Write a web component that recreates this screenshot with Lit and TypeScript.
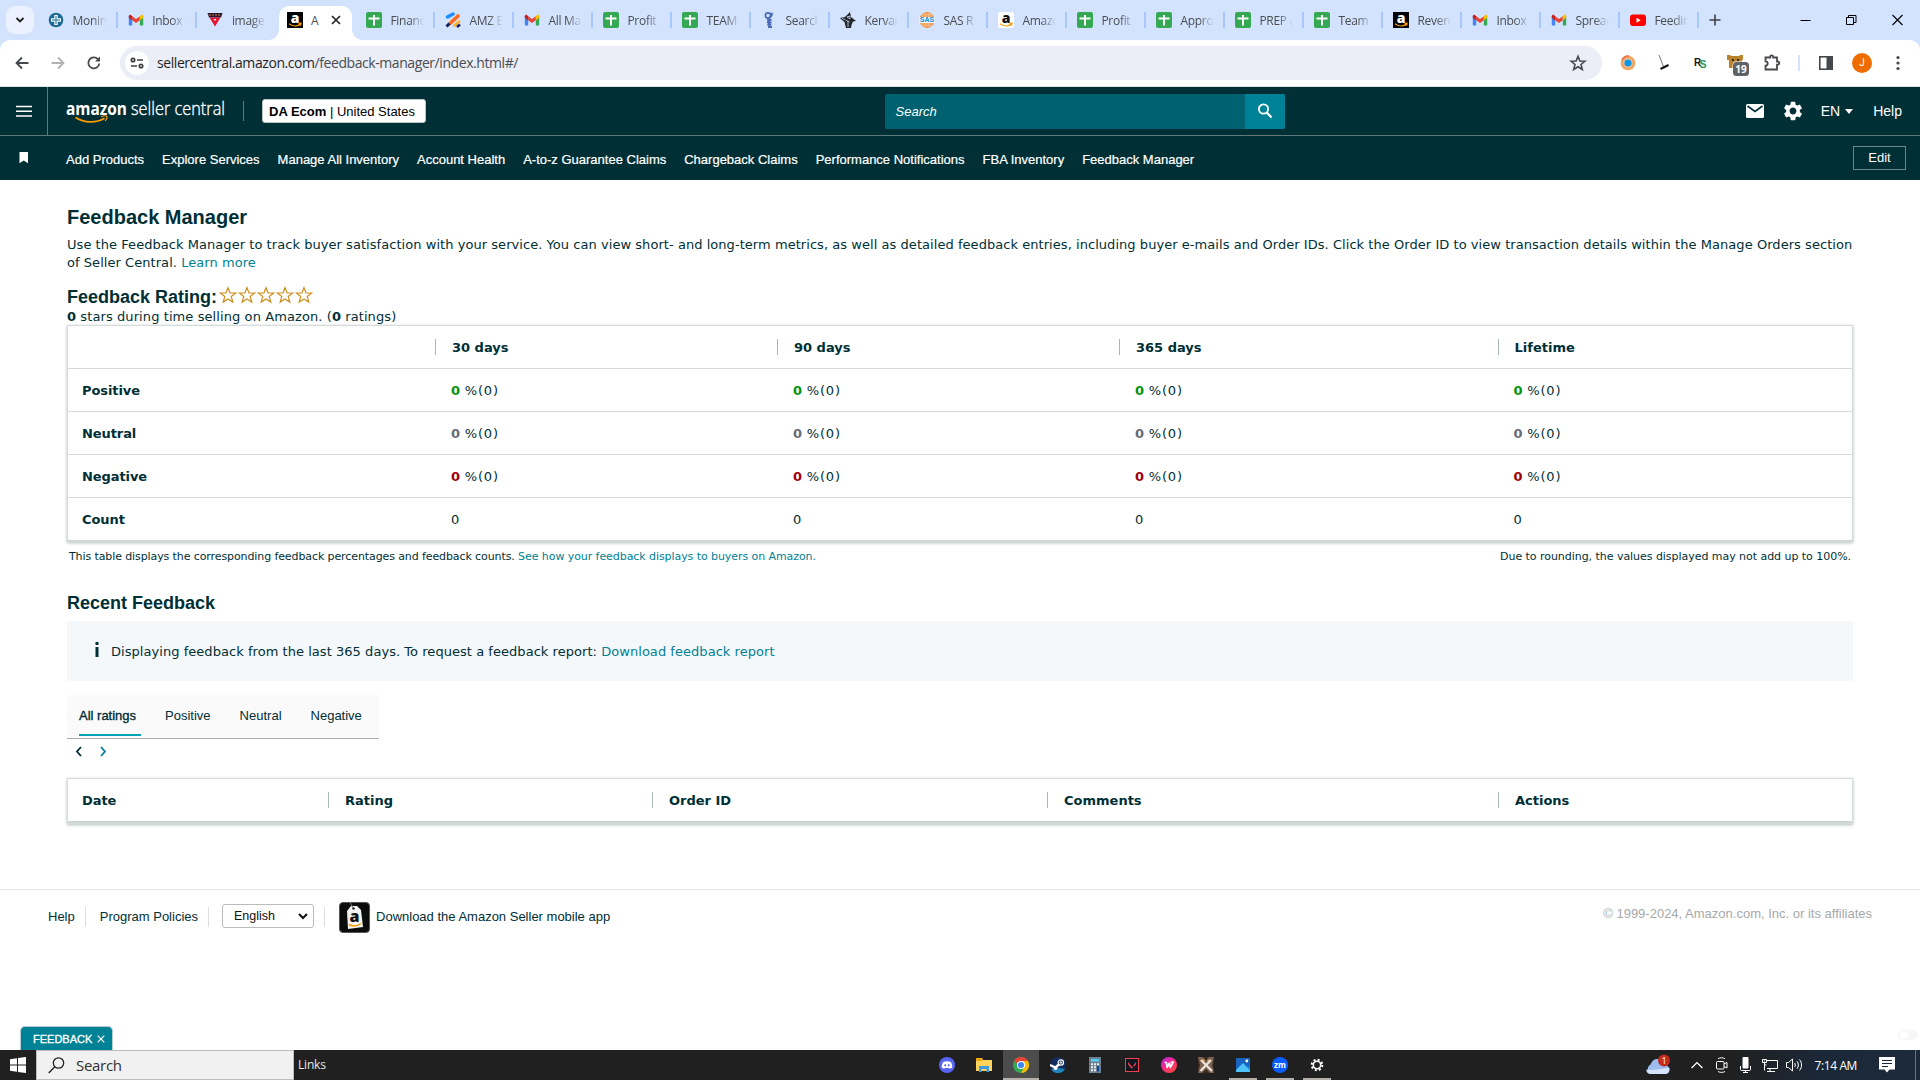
import { LitElement, html, css, TemplateResult } from "lit";
import { customElement } from "lit/decorators.js";

type Icon = TemplateResult;

const sheet: Icon = html`<svg width="16" height="16" viewBox="0 0 16 16"><rect width="16" height="16" rx="2" fill="#34a853"/><path d="M2.5 6.5h11M8 3v10.5" stroke="#fff" stroke-width="2"/></svg>`;
const gmail: Icon = html`<svg width="16" height="16" viewBox="0 0 16 16"><path d="M.8 4v8.6c0 .6.4 1 1 1h2.4V7.3z" fill="#4285f4"/><path d="M15.2 4v8.6c0 .6-.4 1-1 1h-2.4V7.3z" fill="#34a853"/><path d="M4.2 4.2v4L8 11l3.8-2.8v-4L8 7.1z" fill="#ea4335"/><path d="M.8 4.2v1.6l3.4 2.6V4.2L3 3C2 2.3.8 3 .8 4.2z" fill="#c5221f"/><path d="M15.2 4.2v1.6l-3.4 2.6V4.2L13 3c1-.7 2.2 0 2.2 1.2z" fill="#fbbc04"/></svg>`;
const amazon = (bg: string, fg: string): Icon => html`<svg width="16" height="16" viewBox="0 0 16 16"><rect width="16" height="16" rx=${bg === "#fff" ? 2.5 : 0} fill=${bg}/><text x="8" y="10.6" font-family="Open Sans, sans-serif" font-size="14" font-weight="800" text-anchor="middle" fill=${fg}>a</text><path d="M2 11.8c3.5 2.7 8 2.7 11 .6M11.500 11.500l2.500-.2-.5 2.400" fill="none" stroke="#f90" stroke-width="1.3"/></svg>`;
const youtube: Icon = html`<svg width="16" height="16" viewBox="0 0 16 16"><rect y="2.5" width="16" height="11.5" rx="3" fill="#f00"/><path d="M6.5 5.700v5l4.200-2.500z" fill="#fff"/></svg>`;
const monin: Icon = html`<svg width="16" height="16" viewBox="0 0 16 16"><circle cx="8" cy="8" r="7.300" fill="#1b6a94"/><path d="M6.300 3h3.400v3.300H13v3.400H9.700V13H6.300V9.700H3V6.300h3.300z" fill="#fff"/><path d="M8 4v8M4 8h8" stroke="#1b6a94" stroke-width="1"/></svg>`;
const triangle: Icon = html`<svg width="16" height="16" viewBox="0 0 16 16"><path d="M.5 1h15L14 5.500H2z" fill="#2b1830"/><path d="M2 3h12" stroke="#d88a3a" stroke-width="1.200" stroke-dasharray="2 1"/><path d="M2.500 5.500h11L8 14.500z" fill="#e8112d"/><path d="M6.500 7h3L8 9z" fill="#fff"/></svg>`;
const amz: Icon = html`<svg width="16" height="16" viewBox="0 0 16 16"><path d="M2.500 5L8 2" stroke="#1e90ff" stroke-width="3.500" stroke-linecap="round"/><path d="M5.500 11L13 4" stroke="#ff6a1a" stroke-width="3.600" stroke-linecap="round"/><path d="M1.500 14.500l3-3" stroke="#17205c" stroke-width="3"/><path d="M9.500 13.500l4.500-4" stroke="#ffb229" stroke-width="2.800" stroke-linecap="round"/><path d="M12 15l3-2.500" stroke="#17205c" stroke-width="2.500"/></svg>`;
const figure: Icon = html`<svg width="16" height="16" viewBox="0 0 16 16"><g fill="none" stroke="#4a6ab8"><circle cx="7" cy="3.500" r="2.600" stroke-width="1.600"/><path d="M10.500.8c1 2-.5 4-2.500 5.500M6 7.500l4.500.6M6 10l4.500.5M6.300 12.500l4 .3M7 15h4M8 6v9" stroke-width="2"/></g></svg>`;
const kervan: Icon = html`<svg width="16" height="16" viewBox="0 0 16 16"><path d="M0 6l5-1 5-5 1 5 5 4-3 .5-1.500 3.500-.5 3H6L4.500 10 2 8z" fill="#23262b"/><path d="M7 5l3-1v3zM8 9v6M5.500 8l4 2M2 6.500l3 1" stroke="#d3e3fd" stroke-width=".8" fill="none"/></svg>`;
const sas: Icon = html`<svg width="16" height="16" viewBox="0 0 16 16"><circle cx="8" cy="8" r="7.300" fill="#fde6cf"/><g fill="none" stroke="#f08a32"><circle cx="8" cy="8" r="7.300"/><ellipse cx="8" cy="8" rx="3.600" ry="7.300"/><path d="M2 4h12M2 12h12M8 0v16"/></g><rect y="5" width="16" height="6" fill="#eaf3ff"/><text x="8" y="10.300" font-family="Liberation Sans" font-size="7" font-weight="700" text-anchor="middle" fill="#1d8fd6">SAS</text></svg>`;

const TABS_LEFT: [Icon, string][] = [[monin, "Monin"], [gmail, "Inbox ("], [triangle, "image"]];
const TABS_RIGHT: [Icon, string][] = [
  [sheet, "Financ"], [amz, "AMZ E"], [gmail, "All Ma"], [sheet, "Profit"], [sheet, "TEAM"],
  [figure, "Search"], [kervan, "Kervan"], [sas, "SAS R"], [amazon("#fff", "#111"), "Amazo"],
  [sheet, "Profit"], [sheet, "Appro"], [sheet, "PREP a"], [sheet, "Team A"],
  [amazon("#000", "#fff"), "Reven"], [gmail, "Inbox"], [gmail, "Spread"], [youtube, "Feedin"],
];

const gearPath = "M19.14 12.94c.04-.3.06-.61.06-.94 0-.32-.02-.64-.07-.94l2.03-1.58c.18-.14.23-.41.12-.61l-1.92-3.32c-.12-.22-.37-.29-.59-.22l-2.39.96c-.5-.38-1.03-.7-1.62-.94l-.36-2.54c-.04-.24-.24-.41-.48-.41h-3.84c-.24 0-.43.17-.47.41l-.36 2.54c-.59.24-1.13.57-1.62.94l-2.39-.96c-.22-.08-.47 0-.59.22L2.74 8.87c-.12.21-.08.47.12.61l2.03 1.58c-.05.3-.09.63-.09.94s.02.64.07.94l-2.03 1.58c-.18.14-.23.41-.12.61l1.92 3.32c.12.22.37.29.59.22l2.39-.96c.5.38 1.03.7 1.62.94l.36 2.54c.05.24.24.41.48.41h3.84c.24 0 .44-.17.47-.41l.36-2.54c.59-.24 1.13-.56 1.62-.94l2.39.96c.22.08.47 0 .59-.22l1.92-3.32c.12-.22.07-.47-.12-.61l-2.01-1.58zM12 15.600c-1.980 0-3.600-1.620-3.600-3.600s1.620-3.600 3.600-3.600 3.600 1.620 3.600 3.600-1.620 3.600-3.600 3.600z";

@customElement("browser-chrome")
export class BrowserChrome extends LitElement {
  static styles = css`
    :host { display: block; font-family: "Open Sans", "Noto Sans", sans-serif; color: #4a4d51; }
    svg { display: block; flex: none; }
    .strip { display: flex; height: 40px; background: #d3e3fd; }
    .menu { width: 28px; height: 28px; margin: 6px 4px 0 6px; border-radius: 9px; background: #ebf1fe; display: grid; place-items: center; }
    .tab { width: 79px; height: 40px; box-sizing: border-box; display: flex; align-items: center; padding-left: 10px; flex: none; }
    .left .tab { width: 79.7px; }
    .left, .right { display: flex; }
    .label { margin: 2px 0 0 8.5px; width: 35px; font-size: 12px; letter-spacing: -0.3px; line-height: 18px; white-space: nowrap; overflow: hidden; -webkit-mask-image: linear-gradient(90deg, #000 55%, transparent 97%); mask-image: linear-gradient(90deg, #000 55%, transparent 97%); }
    .tab::after { content: ""; width: 2px; height: 16px; background: #a8c7fa; margin-left: auto; }
    .left .tab:last-child::after { background: none; }
    .active { width: 73px; margin: 6px 4px 0 1.900px; background: #fff; border-radius: 10px 10px 0 0; display: flex; align-items: center; padding: 0 0 6px 8px; box-sizing: border-box; font-size: 12px; position: relative; }
    .active span { margin: 1px auto 0 8px; }
    .active svg:last-child { margin-right: 11px; }
    .active::before, .active::after { content: ""; position: absolute; bottom: 0; width: 10px; height: 10px; }
    .active::before { left: -10px; background: radial-gradient(circle at 0 0, transparent 9.5px, #fff 10px); }
    .active::after { right: -10px; background: radial-gradient(circle at 100% 0, transparent 9.5px, #fff 10px); }
    .plus { margin: 14px 0 0 10px; }
    .win { margin-left: auto; display: flex; gap: 35px; padding: 14px 17px 0 0; }
    .barwrap { background: #d3e3fd; }
    .bar { height: 47px; box-sizing: border-box; border-bottom: 1px solid #dcdfe3; background: #fff; border-radius: 10px 10px 0 0; display: flex; align-items: center; padding: 0 13px 1px 13px; }
    .nav { display: flex; gap: 18px; width: 107px; flex: none; }
    .url { flex: none; width: 1482px; height: 34px; border-radius: 17px; background: #ebeef7; display: flex; align-items: center; box-sizing: border-box; padding: 0 15px 0 5px; }
    .site { width: 24px; height: 24px; border-radius: 50%; background: #fff; display: grid; place-items: center; margin-right: 8px; }
    .addr { font-size: 14px; letter-spacing: -0.430px; color: #4a4d51; white-space: nowrap; }
    .addr b { font-weight: 400; color: #1f1f1f; }
    .url > svg { margin-left: auto; }
    .ext { flex: 1; display: flex; align-items: center; padding-left: 16px; gap: 16px; }
    .ext svg { margin-right: 0; }
    .ext .bear { margin-right: -4px; }
    .sep { width: 2px; height: 16px; background: #d3e3fd; }
    .ext .side { margin: 0 1px; }
    .avatar { width: 20px; height: 20px; border-radius: 50%; background: #ef6c00; color: #fff; font: 10px/20px Roboto, sans-serif; text-align: center; }
  `;
  tab(t: [Icon, string]) {
    return html`<div class="tab">${t[0]}<span class="label">${t[1]}</span></div>`;
  }
  render() {
    return html`
      <div class="strip">
        <div class="menu"><svg width="10" height="10" viewBox="0 0 10 10"><path d="M1.500 3L5 6.500 8.500 3" fill="none" stroke="#1f1f1f" stroke-width="1.800"/></svg></div>
        <div class="left">${TABS_LEFT.map((t) => this.tab(t))}</div>
        <div class="active">${amazon("#000", "#fff")}<span>A</span><svg width="10" height="10" viewBox="0 0 10 10"><path d="M1 1l8 8M9 1L1 9" stroke="#1f1f1f" stroke-width="1.600"/></svg></div>
        <div class="right">${TABS_RIGHT.map((t) => this.tab(t))}</div>
        <svg class="plus" width="12" height="12" viewBox="0 0 12 12"><path d="M6 .5v11M.5 6h11" stroke="#3c4043" stroke-width="1.600"/></svg>
        <div class="win">
          <svg width="11" height="12" viewBox="0 0 11 12"><path d="M.5 6.500h10" stroke="#000"/></svg>
          <svg width="11" height="12" viewBox="0 0 11 12"><path d="M.5 3.500h7v7h-7zM2.500 3V1.500h7.500v7H8" fill="none" stroke="#000"/></svg>
          <svg width="11" height="12" viewBox="0 0 11 12"><path d="M.5 1l10 10M10.500 1l-10 10" stroke="#000" stroke-width="1.100"/></svg>
        </div>
      </div>
      <div class="barwrap"><div class="bar">
        <div class="nav">
          <svg width="18" height="18" viewBox="0 0 18 18"><path d="M15.500 9H4M9 3.500L3.500 9 9 14.500" fill="none" stroke="#45484c" stroke-width="1.800"/></svg>
          <svg width="18" height="18" viewBox="0 0 18 18"><path d="M2.500 9H14M9 3.500L14.500 9 9 14.500" fill="none" stroke="#b0b3b6" stroke-width="1.800"/></svg>
          <svg width="18" height="18" viewBox="0 0 18 18"><path d="M14.300 9.500A5.500 5.500 0 1 1 12.800 5.100l1 1" fill="none" stroke="#45484c" stroke-width="1.800"/><path d="M15 2.500v5h-5z" fill="#45484c"/></svg>
        </div>
        <div class="url">
          <div class="site"><svg width="14" height="12" viewBox="0 0 14 12" fill="none" stroke="#3c4043" stroke-width="1.700"><circle cx="3" cy="3" r="1.700"/><path d="M7 3h6M1 9h6"/><circle cx="11" cy="9" r="1.700"/></svg></div>
          <span class="addr"><b>sellercentral.amazon.com</b>/feedback-manager/index.html#/</span>
          <svg width="18" height="18" viewBox="0 0 18 18"><path d="M9 2.300l1.900 4.700 5 .3-3.900 3.200 1.300 4.900L9 12.700l-4.300 2.700L6 10.500 2.100 7.300l5-.3z" fill="none" stroke="#45484c" stroke-width="1.600"/></svg>
        </div>
        <div class="ext">
          <svg width="20" height="20" viewBox="0 0 20 20"><circle cx="10" cy="10" r="7.300" fill="#f2a463"/><circle cx="10" cy="10" r="4.500" fill="#f5c7a0"/><circle cx="10" cy="10" r="3.600" fill="#0c95e8"/><path d="M4 7a7 7 0 0 1 7-4" stroke="#e8734a" stroke-width="1.500" fill="none"/></svg>
          <svg width="20" height="20" viewBox="0 0 20 20"><path d="M5 2l5 13" stroke="#777" stroke-width="1"/><path d="M6.500 16l8-4" stroke="#111" stroke-width="2"/></svg>
          <svg width="20" height="20" viewBox="0 0 20 20"><text x="4" y="13" font-family="Liberation Sans" font-weight="700" font-size="10" fill="#111">R</text><text x="9.500" y="15" font-family="Liberation Sans" font-weight="700" font-size="10.500" fill="#1f9a55">S</text></svg>
          <svg class="bear" width="24" height="26" viewBox="0 0 24 26"><path d="M1 5h3l1 1h8l1-1h3v5h-1v8H3v-8H1z" fill="#b9822b"/><path d="M6 10h2M11 10h2" stroke="#3c2a10" stroke-width="2"/><rect x="6.500" y="11.500" width="17" height="15" rx="4" fill="#fff"/><rect x="7" y="12" width="16" height="14" rx="3.500" fill="#5f6368"/><text x="15" y="23" font-family="Open Sans" font-weight="700" font-size="10" fill="#fff" text-anchor="middle">19</text></svg>
          <svg width="20" height="20" viewBox="0 0 20 20"><path d="M4 4.500h4.200v-.7a1.500 1.500 0 0 1 3 0v.7H15v4h.7a1.600 1.600 0 0 1 0 3.200H15V16.500H3.500v-3.800a2.200 2.200 0 0 0 0-4.400V4.500z" fill="none" stroke="#45484c" stroke-width="1.800"/></svg>
          <span class="sep"></span>
          <svg class="side" width="18" height="18" viewBox="0 0 18 18"><rect x="2.800" y="2.800" width="12.400" height="12.400" fill="none" stroke="#45484c" stroke-width="1.600"/><path d="M9.500 3h6v12h-6z" fill="#45484c"/></svg>
          <span class="avatar">J</span>
          <svg width="20" height="20" viewBox="0 0 20 20" fill="#45484c"><circle cx="10" cy="4.500" r="1.600"/><circle cx="10" cy="10" r="1.600"/><circle cx="10" cy="15.500" r="1.600"/></svg>
        </div>
      </div></div>`;
  }
}

@customElement("seller-header")
export class SellerHeader extends LitElement {
  static styles = css`
    :host { display: block; background: #002f36; color: #fff; font-family: "Liberation Sans", Arial, sans-serif; }
    svg { display: block; flex: none; }
    .top { display: flex; align-items: center; height: 49px; box-sizing: border-box; border-bottom: 1px solid #5d7a7e; }
    .burger { width: 48px; height: 48px; box-sizing: border-box; border-right: 1px solid #5d7a7e; display: grid; place-items: center; }
    .logo { margin-left: 18px; }
    .bar { width: 1px; height: 20px; background: #5d7a7e; margin: 0 18px 0 13px; }
    .store { width: 164px; height: 24px; box-sizing: border-box; background: #fff; color: #000; border: 1px solid #bcc5c6; border-radius: 3px; font-size: 13px; line-height: 23px; padding-left: 6px; white-space: nowrap; }
    .search { margin-left: 459px; width: 400px; height: 35px; display: flex; background: #006170; border-radius: 2px; overflow: hidden; }
    .search i { flex: 1; font-size: 13px; line-height: 35px; padding-left: 10.500px; }
    .go { width: 40px; background: #008296; display: grid; place-items: center; }
    .tools { margin-left: auto; display: flex; align-items: center; font-size: 14px; padding-right: 18px; }
    .tools svg:first-child { margin-right: 19px; }
    .tools .en { margin-left: 18px; }
    .caret { margin: 1px 20px 0 5px; border: 4.500px solid transparent; border-top: 5px solid #fff; border-bottom: 0; }
    .nav { display: flex; align-items: center; height: 44px; font-size: 13px; line-height: 18px; padding: 0 14px 0 19px; white-space: nowrap; box-sizing: border-box; }
    .links { display: flex; gap: 18px; margin-left: 37px; padding-top: 3px; -webkit-text-stroke: 0.200px #fff; }
    .edit { margin-left: auto; width: 53px; height: 24px; border: 1px solid #6c8589; box-sizing: border-box; text-align: center; line-height: 22px; }
  `;
  render() {
    const links = ["Add Products", "Explore Services", "Manage All Inventory", "Account Health", "A-to-z Guarantee Claims", "Chargeback Claims", "Performance Notifications", "FBA Inventory", "Feedback Manager"];
    return html`
      <div class="top">
        <div class="burger"><svg width="16" height="12" viewBox="0 0 16 12"><path d="M0 1.500h16M0 6.200h16M0 11h16" stroke="#fff" stroke-width="1.500"/></svg></div>
        <svg class="logo" width="164" height="34" viewBox="0 0 164 34">
          <text x="0" y="21" font-family="Open Sans" font-weight="700" font-size="17.500" fill="#fff" textLength="61" lengthAdjust="spacingAndGlyphs">amazon</text>
          <text x="65" y="20.500" font-family="Open Sans" font-weight="300" font-size="18" fill="#fff" stroke="#fff" stroke-width=".35" textLength="94" lengthAdjust="spacingAndGlyphs">seller central</text>
          <path d="M9.500 23.500c9 5.500 20 6 29 .8" fill="none" stroke="#f90" stroke-width="1.700"/><path d="M35 22.800c3-1.200 5.500-1.200 6 0s-.7 2.700-1.800 4" fill="none" stroke="#f90" stroke-width="1.200"/>
        </svg>
        <span class="bar"></span>
        <div class="store"><b>DA Ecom</b> | United States</div>
        <div class="search"><i>Search</i><div class="go"><svg width="16" height="18" viewBox="0 0 16 18"><circle cx="6.500" cy="7" r="4.600" fill="none" stroke="#fff" stroke-width="1.800"/><path d="M9.800 10.500l4.700 5" stroke="#fff" stroke-width="2.200"/></svg></div></div>
        <div class="tools">
          <svg width="18" height="14" viewBox="0 0 18 14"><rect width="18" height="14" rx="1.500" fill="#fff"/><path d="M1.500 2L9 7.500 16.500 2" fill="none" stroke="#002f36" stroke-width="1.600"/></svg>
          <svg width="20" height="20" viewBox="1.500 1.500 21 21"><path d=${gearPath} fill="#fff"/></svg>
          <span class="en">EN</span><span class="caret"></span><span>Help</span>
        </div>
      </div>
      <div class="nav">
        <svg width="10" height="12" viewBox="0 0 10 12"><path d="M.5 0h8.500v11.300L4.750 8.500.5 11.300z" fill="#fff"/></svg>
        <div class="links">${links.map((l) => html`<span>${l}</span>`)}</div>
        <div class="edit">Edit</div>
      </div>`;
  }
}

@customElement("feedback-page")
export class FeedbackPage extends LitElement {
  static styles = css`
    :host { display: block; color: #002f36; font: 13px/18px "DejaVu Sans", Verdana, sans-serif; letter-spacing: 0.045px; }
    svg { display: block; }
    .main { padding: 25px 67px 0; height: 709px; box-sizing: border-box; }
    h1, h2, p { margin: 0; }
    h1, h2 { font-family: "Liberation Sans", Arial, sans-serif; letter-spacing: 0; }
    h1 { font-size: 20px; line-height: 24px; }
    h2 { font-size: 18px; line-height: 22px; }
    p { margin: 7px -8px 0 0; letter-spacing: 0.050px; }
    .link { color: #008296; }
    .rating { display: flex; margin-top: 14px; gap: 2px; height: 21px; }
    .stars { display: flex; gap: 1px; }
    .sum { padding-top: 1px; height: 17px; letter-spacing: 0.090px; }
    .box { border: 1px solid #d5dbdb; box-shadow: 0 1px 3px rgba(0, 40, 40, 0.300); background: #fff; }
    .row { display: grid; grid-template-columns: 367px 342px 342px 378.500px 1fr; height: 43px; box-sizing: border-box; border-bottom: 1px solid #d5dbdb; align-items: center; letter-spacing: 0; }
    .entries .row { grid-template-columns: 260px 324px 395px 451px 1fr; }
    .entries .row { border-bottom-width: 2px; height: 44px; }
    .row:last-child { border-bottom-color: #ccd4d4; }
    .row > * { padding: 2px 0 0 16px; }
    .row > :first-child { padding-left: 14px; font-weight: 700; letter-spacing: -0.080px; }
    .row.head > * { padding-top: 0; border-left: 1px solid #aab7b8; line-height: 16px; height: 16px; font-weight: 700; }
    .row.head > :first-child { border-left: 0; }
    .head > * > span { position: relative; top: 1px; }
    .pc { letter-spacing: 0.850px; margin-left: 0.500px; }
    .good { color: #00960a; } .mid { color: #666b75; } .bad { color: #a00009; }
    .note { display: flex; justify-content: space-between; font-size: 11px; padding: 0 2px; margin: 6px 0 26px; letter-spacing: -0.040px; }
    .note span:first-child { letter-spacing: -0.100px; }
    .note span .link:first-child { letter-spacing: -0.070px; }
    .info { margin-top: 7px; height: 60px; box-sizing: border-box; padding-top: 1px; background: #f4f8fa; display: flex; align-items: center; padding-left: 28px; gap: 12px; }
    .info svg { margin-top: -4px; }
    .tabs { display: flex; margin-top: 14px; width: 312px; height: 44px; box-sizing: border-box; border-bottom: 1px solid #aaafb0; background: #fafafa; font: 13px/16px "Liberation Sans", Arial, sans-serif; letter-spacing: 0; padding: 13px 0 0 12px; gap: 29px; }
    .tabs span:first-child { -webkit-text-stroke: 0.350px #002f36; border-bottom: 2px solid #00a4b4; padding: 0 5px 0 0; height: 26px; margin-right: -5px; white-space: nowrap; }
    .pager { display: flex; gap: 16px; padding: 7px 0 0 8px; height: 39px; box-sizing: border-box; }
    .foot { border-top: 1px solid #e3e5e6; height: 161px; box-sizing: border-box; display: flex; font: 13px/20px "Liberation Sans", Arial, sans-serif; letter-spacing: 0; padding: 11px 48px 0; position: relative; align-items: flex-start; }
    .foot > span { margin-top: 6px; }
    .foot .v { width: 1px; height: 20px; background: #dcdfe0; }
    .foot .v1 { margin-left: 10px; margin-right: 14px; }
    .foot .v2 { margin-left: 10px; }
    .sel { box-sizing: border-box; width: 92px; height: 24px; margin: 3px 10px 0 13px; border: 1px solid #bbb; border-radius: 3px; padding: 0 5px 0 11px; line-height: 24px; display: flex; justify-content: space-between; align-items: center; font-size: 12.500px; color: #111; }
    .app { margin: 1px 6px 0 14px; }
    .copy { margin-left: auto; color: #a6a9ab; }
    .foot > .copy { margin-top: 3px; }
    .tag { position: absolute; left: 20px; bottom: 0; width: 93px; height: 24px; box-sizing: border-box; border: 1px solid #b9cccf; border-bottom: 0; border-radius: 5px 5px 0 0; background: #008296; color: #fff; font-size: 11px; line-height: 24px; padding-left: 12px; display: flex; align-items: center; gap: 5px; -webkit-text-stroke: 0.300px #fff; }
    .toggle { position: absolute; right: 2px; bottom: 10px; width: 20px; height: 10px; border-radius: 5px; background: #f7f7f7; }
    .toggle::after { content: ""; position: absolute; left: 2px; top: 1px; width: 8px; height: 8px; border-radius: 50%; background: #fff; }
  `;
  pct(cls: string) {
    return [0, 1, 2, 3].map(() => html`<span><b class=${cls}>0</b> <span class="pc">%(0)</span></span>`);
  }
  render() {
    const head = (h: string) => html`<span><span>${h}</span></span>`;
    return html`
      <div class="main">
        <h1>Feedback Manager</h1>
        <p>Use the Feedback Manager to track buyer satisfaction with your service. You can view short- and long-term metrics, as well as detailed feedback entries, including buyer e-mails and Order IDs. Click the Order ID to view transaction details within the Manage Orders section of Seller Central. <span class="link">Learn more</span></p>
        <div class="rating"><h2>Feedback Rating:</h2><div class="stars">${[1, 2, 3, 4, 5].map(() => html`<svg width="18" height="18" viewBox="0 0 18 18"><path d="M9 1.600l2 5.200 5.700.2-4.500 3.500 1.600 5.500L9 12.900l-4.800 3.100 1.600-5.500L1.300 7 7 6.800z" fill="#fff" stroke="#cf8f1f" stroke-width="1.200"/></svg>`)}</div></div>
        <div class="sum"><b>0</b> stars during time selling on Amazon. (<b>0</b> ratings)</div>
        <div class="box">
          <div class="row head">${["", "30 days", "90 days", "365 days", "Lifetime"].map(head)}</div>
          <div class="row"><span>Positive</span>${this.pct("good")}</div>
          <div class="row"><span>Neutral</span>${this.pct("mid")}</div>
          <div class="row"><span>Negative</span>${this.pct("bad")}</div>
          <div class="row"><span>Count</span><span>0</span><span>0</span><span>0</span><span>0</span></div>
        </div>
        <div class="note"><span>This table displays the corresponding feedback percentages and feedback counts. <span class="link">See how your feedback displays to buyers on Amazon.</span></span><span>Due to rounding, the values displayed may not add up to 100%.</span></div>
        <h2>Recent Feedback</h2>
        <div class="info"><svg width="4" height="15" viewBox="0 0 4 15"><path d="M.5 0h3v3h-3zM.5 5h3v10h-3z" fill="#002f36"/></svg><span>Displaying feedback from the last 365 days. To request a feedback report: <span class="link">Download feedback report</span></span></div>
        <div class="tabs"><span>All ratings</span><span>Positive</span><span>Neutral</span><span>Negative</span></div>
        <div class="pager">
          <svg width="8" height="11" viewBox="0 0 8 11"><path d="M6 1L2 5.500 6 10" fill="none" stroke="#002f36" stroke-width="1.800"/></svg>
          <svg width="8" height="11" viewBox="0 0 8 11"><path d="M2 1l4 4.500L2 10" fill="none" stroke="#008296" stroke-width="1.800"/></svg>
        </div>
        <div class="box entries"><div class="row head">${["Date", "Rating", "Order ID", "Comments", "Actions"].map(head)}</div></div>
      </div>
      <div class="foot">
        <span>Help</span><span class="v v1"></span>
        <span>Program Policies</span><span class="v v2"></span>
        <div class="sel">English<svg width="10" height="7" viewBox="0 0 10 7"><path d="M1 1l4 4 4-4" fill="none" stroke="#111" stroke-width="2"/></svg></div>
        <span class="v"></span>
        <svg class="app" width="31" height="31" viewBox="0 0 31 31"><rect x=".5" y=".5" width="30" height="30" rx="3.500" fill="#0c0c0c" stroke="#555"/><path d="M8 9l4-5 6 0 4 4 2 17-15 2z" fill="#f4f4f2"/><circle cx="14.500" cy="6.500" r="1.200" fill="#222"/><path d="M14 6L11 0" stroke="#777"/><text x="15.500" y="20" font-family="Open Sans" font-weight="800" font-size="16" text-anchor="middle" fill="#111">a</text><path d="M10 22.500c4 2.200 8 1.800 12-1" stroke="#f90" stroke-width="1.500" fill="none"/></svg>
        <span>Download the Amazon Seller mobile app</span>
        <span class="copy">© 1999-2024, Amazon.com, Inc. or its affiliates</span>
        <div class="tag">FEEDBACK<svg width="8" height="8" viewBox="0 0 8 8"><path d="M.7.7l6.600 6.600M7.300.7L.7 7.300" stroke="#fff" stroke-width="1.200"/></svg></div>
        <div class="toggle"></div>
      </div>`;
  }
}

const APPS: { icon: Icon; state?: string }[] = [
  { icon: html`<svg width="16" height="16" viewBox="0 0 16 16"><circle cx="8" cy="8" r="8" fill="#5865f2"/><path d="M4 5.200c2.500-1.300 5.500-1.300 8 0 1 2 1.400 3.700 1.200 5.300-.8.600-1.600 1-2.500 1.200l-.7-1c-1.300.3-2.700.3-4 0l-.7 1c-.9-.2-1.700-.6-2.500-1.200-.2-1.600.2-3.300 1.200-5.300z" fill="#fff"/><circle cx="6.200" cy="8.300" r="1.100" fill="#5865f2"/><circle cx="9.800" cy="8.300" r="1.100" fill="#5865f2"/></svg>` },
  { icon: html`<svg width="16" height="16" viewBox="0 0 16 16"><path d="M0 1h6l1 2h9v11H0z" fill="#ffd35a"/><path d="M0 1h6l1 2-1 1H0z" fill="#e8a713"/><path d="M3 15V9h10v6h-2.500v-3h-5v3z" fill="#3f9be0"/></svg>` },
  { state: "on", icon: html`<svg width="16" height="16" viewBox="0 0 16 16"><circle cx="8" cy="8" r="8" fill="#34a853"/><path d="M8 4h6.930A8 8 0 0 1 8 16l3.460-6z" fill="#fbbc04"/><path d="M1.070 4A8 8 0 0 1 14.930 4H8L4.500 7z" fill="#ea4335"/><circle cx="8" cy="8" r="4" fill="#fff"/><circle cx="8" cy="8" r="3.100" fill="#4285f4"/></svg>` },
  { icon: html`<svg width="16" height="16" viewBox="0 0 16 16"><circle cx="8" cy="8" r="8" fill="#122d5c"/><path d="M1 12a8 8 0 0 0 14 0l-7-1z" fill="#1d86c0"/><path d="M0 8l5.500 2.500 4.500-4" stroke="#fff" stroke-width="2.400" fill="none"/><circle cx="10.800" cy="5.500" r="2.700" fill="#122d5c" stroke="#fff" stroke-width="1.200"/><circle cx="10.800" cy="5.500" r="1.300" fill="#cfd8e6"/><circle cx="5.500" cy="11" r="2" fill="#fff"/></svg>` },
  { icon: html`<svg width="14" height="16" viewBox="0 0 14 16"><rect x="1" width="12" height="16" fill="#6e7f8d"/><path d="M3 2h8v2.500H3z" fill="#4fd0f5"/><path d="M3 7.300h8M3 10.300h5.500M3 13.300h5.500" stroke="#e8eef2" stroke-width="2" stroke-dasharray="2 1"/><path d="M9 9h2v5.500H9z" fill="#0a4a9a"/></svg>` },
  { icon: html`<svg width="14" height="14" viewBox="0 0 14 14"><rect x=".5" y=".5" width="13" height="13" fill="#10151f" stroke="#f0404f"/><path d="M3 4v2.300l3.200 4h2.200zM11 4v2.300L9.500 8.300H7.800z" fill="#f0404f"/></svg>` },
  { icon: html`<svg width="16" height="16" viewBox="0 0 16 16"><defs><linearGradient id="w" x2=".8" y2="1"><stop offset="0" stop-color="#b024f0"/><stop offset=".5" stop-color="#f52a86"/><stop offset="1" stop-color="#ff4a3a"/></linearGradient></defs><circle cx="8" cy="8" r="8" fill="url(#w)"/><path d="M3.500 5.500h2L6 10.500 8.500 6l.8 4.500L12.300 5H9.800" stroke="#fff" stroke-width="1.600" fill="none" stroke-linejoin="round"/></svg>` },
  { icon: html`<svg width="16" height="16" viewBox="0 0 16 16"><rect width="16" height="16" fill="#3c2a20"/><path d="M0 0h5l3 4 3-4h5l-2 8 2 8h-4l-4-4-4 4H0l2-8z" fill="#7b6250"/><path d="M3 3l11 11M13 3L2.500 14" stroke="#ece4da" stroke-width="2.400"/><path d="M4 3.500h2.500M9.500 3.500H12" stroke="#f5c070" stroke-width="1.500"/></svg>` },
  { state: "run", icon: html`<svg width="14" height="14" viewBox="0 0 14 14"><rect width="14" height="14" rx="1" fill="#1765c0"/><path d="M0 14v-2l7-7 7 7v2z" fill="#4fc3f7"/><path d="M7 5l7 7V8.500L10.500 8z" fill="#1b82d8"/><circle cx="10.800" cy="3" r="1.400" fill="#fff"/></svg>` },
  { state: "run", icon: html`<svg width="16" height="16" viewBox="0 0 16 16"><circle cx="8" cy="8" r="8" fill="#0b5cff"/><text x="8" y="10.800" font-family="Open Sans" font-weight="700" font-size="8" text-anchor="middle" fill="#fff">zm</text></svg>` },
  { state: "run", icon: html`<svg width="14" height="14" viewBox="0 0 14 14"><circle cx="7" cy="7" r="3.700" fill="none" stroke="#fff" stroke-width="1.600"/><circle cx="7" cy="7" r="5.300" fill="none" stroke="#fff" stroke-width="2" stroke-dasharray="2 2.160"/></svg>` },
];

@customElement("task-bar")
export class TaskBar extends LitElement {
  static styles = css`
    :host { display: flex; height: 30px; background: linear-gradient(90deg, #202020 90%, #1b2838 95%, #1c2a3b); color: #fff; font-family: "Open Sans", "Noto Sans", sans-serif; }
    svg { display: block; }
    .start { width: 36px; display: grid; place-items: center; }
    .search { width: 258px; box-sizing: border-box; border: 1px solid #bdbdbd; background: #f1f1f1; color: #303030; display: flex; align-items: center; padding-left: 11px; gap: 11px; font-size: 15px; letter-spacing: -0.300px; }
    .links { font-size: 12px; line-height: 30px; margin-left: 4px; width: 630.500px; color: #e8e8e8; letter-spacing: -0.200px; }
    .apps { display: flex; gap: 1px; }
    .app { width: 36px; box-sizing: border-box; display: grid; place-items: center; }
    .on { background: #4c4c4c; border-bottom: 2px solid #b5b0aa; padding-top: 2px; }
    .run { background: linear-gradient(#b5b0aa, #b5b0aa) 50% 100% / 28px 2px no-repeat; }
    .tray { margin-left: auto; display: flex; align-items: center; }
    .time { font-size: 12px; letter-spacing: -0.400px; margin: 0 22px 0 12px; white-space: nowrap; }
    .edge { width: 1px; height: 30px; background: #68717c; margin: 0 4px 0 20px; }
    .cloud { margin-right: 20px; }
    .up { margin-right: 13px; }
    .cam { margin-right: 12px; }
    .mic { margin-right: 11px; }
    .net { margin-right: 8px; }
  `;
  render() {
    return html`
      <div class="start"><svg width="16" height="16" viewBox="0 0 16 16" fill="#fff"><path d="M0 2.200L7 1.200v6.300H0zM8 1l8-1v7.500H8zM0 8.500h7v6.300L0 13.800zM8 8.500h8V16l-8-1z"/></svg></div>
      <div class="search"><svg width="17" height="17" viewBox="0 0 17 17"><circle cx="10.500" cy="6" r="5.200" fill="none" stroke="#202020" stroke-width="1.300"/><path d="M6.800 9.700L.7 16" stroke="#202020" stroke-width="1.300"/></svg>Search</div>
      <div class="links">Links</div>
      <div class="apps">${APPS.map((a) => html`<div class="app ${a.state ?? ""}">${a.icon}</div>`)}</div>
      <div class="tray">
        <svg class="cloud" width="26" height="22" viewBox="0 0 26 22"><path d="M6 20a5.300 5.300 0 0 1-.5-9.500C7 6 11 4 14.500 5.500c4 1 5 3.500 5.300 5.500 3 .3 4.700 2 4.700 4.700S22.500 20 20 20z" fill="#9dbcf0"/><path d="M6 20c-3 0-5-2-4.500-4.500C9 17 18 14 24.300 14c.6 3-1.300 6-4.300 6z" fill="#d5e4fc"/><circle cx="19" cy="6.500" r="6" fill="#c42b1c"/><text x="19" y="9.800" font-family="Open Sans" font-size="9" text-anchor="middle" fill="#fff">1</text></svg>
        <svg class="up" width="12" height="8" viewBox="0 0 12 8"><path d="M.6 7L6 1.600 11.400 7" fill="none" stroke="#fff" stroke-width="1.300"/></svg>
        <svg class="cam" width="12" height="16" viewBox="0 0 12 16" fill="none" stroke="#fff"><rect x=".5" y="4.500" width="7.500" height="7.500" rx="1"/><path d="M8 7l3-1.500v5.500L8 9.500M2 1.800C4 .4 7 .4 9 1.800M2 14.500c2 1.200 5 1.200 7 0"/></svg>
        <svg class="mic" width="11" height="16" viewBox="0 0 11 16"><rect x="2.500" width="6" height="11.500" rx="1" fill="#fff"/><path d="M.5 9v3.500c0 .8.600 1 1 1h8c.6 0 1-.3 1-1V9M5.500 13v2.500M3 15.500h5" stroke="#fff" fill="none"/></svg>
        <svg class="net" width="16" height="14" viewBox="0 0 16 14" fill="none" stroke="#fff"><path d="M5 2.500h10.500v8H5M.5 1.500h4v3h-4zM2.500 5v7.500M2.500 7h2M8 11v2.500M5 13.500h8M2 3h1"/></svg>
        <svg width="17" height="14" viewBox="0 0 17 14" fill="none" stroke="#fff"><path d="M.5 4.500h2l4-3.500v12l-4-3.500h-2zM8.500 5c1 1 1 3 0 4M11 3.300c1.800 2 1.800 5.400 0 7.400M13.500 1.500c2.700 3 2.700 8 0 11"/></svg>
        <span class="time">7:14 AM</span>
        <svg width="16" height="16" viewBox="0 0 16 16"><path d="M0 0h16v12.500h-5.500L8 15.500l-2.500-3H0z" fill="#fff"/><path d="M3 3.500h10M3 6.500h10M3 9.500h6" stroke="#1b2838"/></svg>
        <span class="edge"></span>
      </div>`;
  }
}

@customElement("app-root")
export class AppRoot extends LitElement {
  static styles = css`
    :host { display: flex; flex-direction: column; width: 1920px; height: 1080px; overflow: hidden; background: #fff; }
    feedback-page { height: 870px; }
    browser-chrome { height: 87px; }
    seller-header { height: 93px; }
  `;
  render() {
    return html`<browser-chrome></browser-chrome><seller-header></seller-header><feedback-page></feedback-page><task-bar></task-bar>`;
  }
}
